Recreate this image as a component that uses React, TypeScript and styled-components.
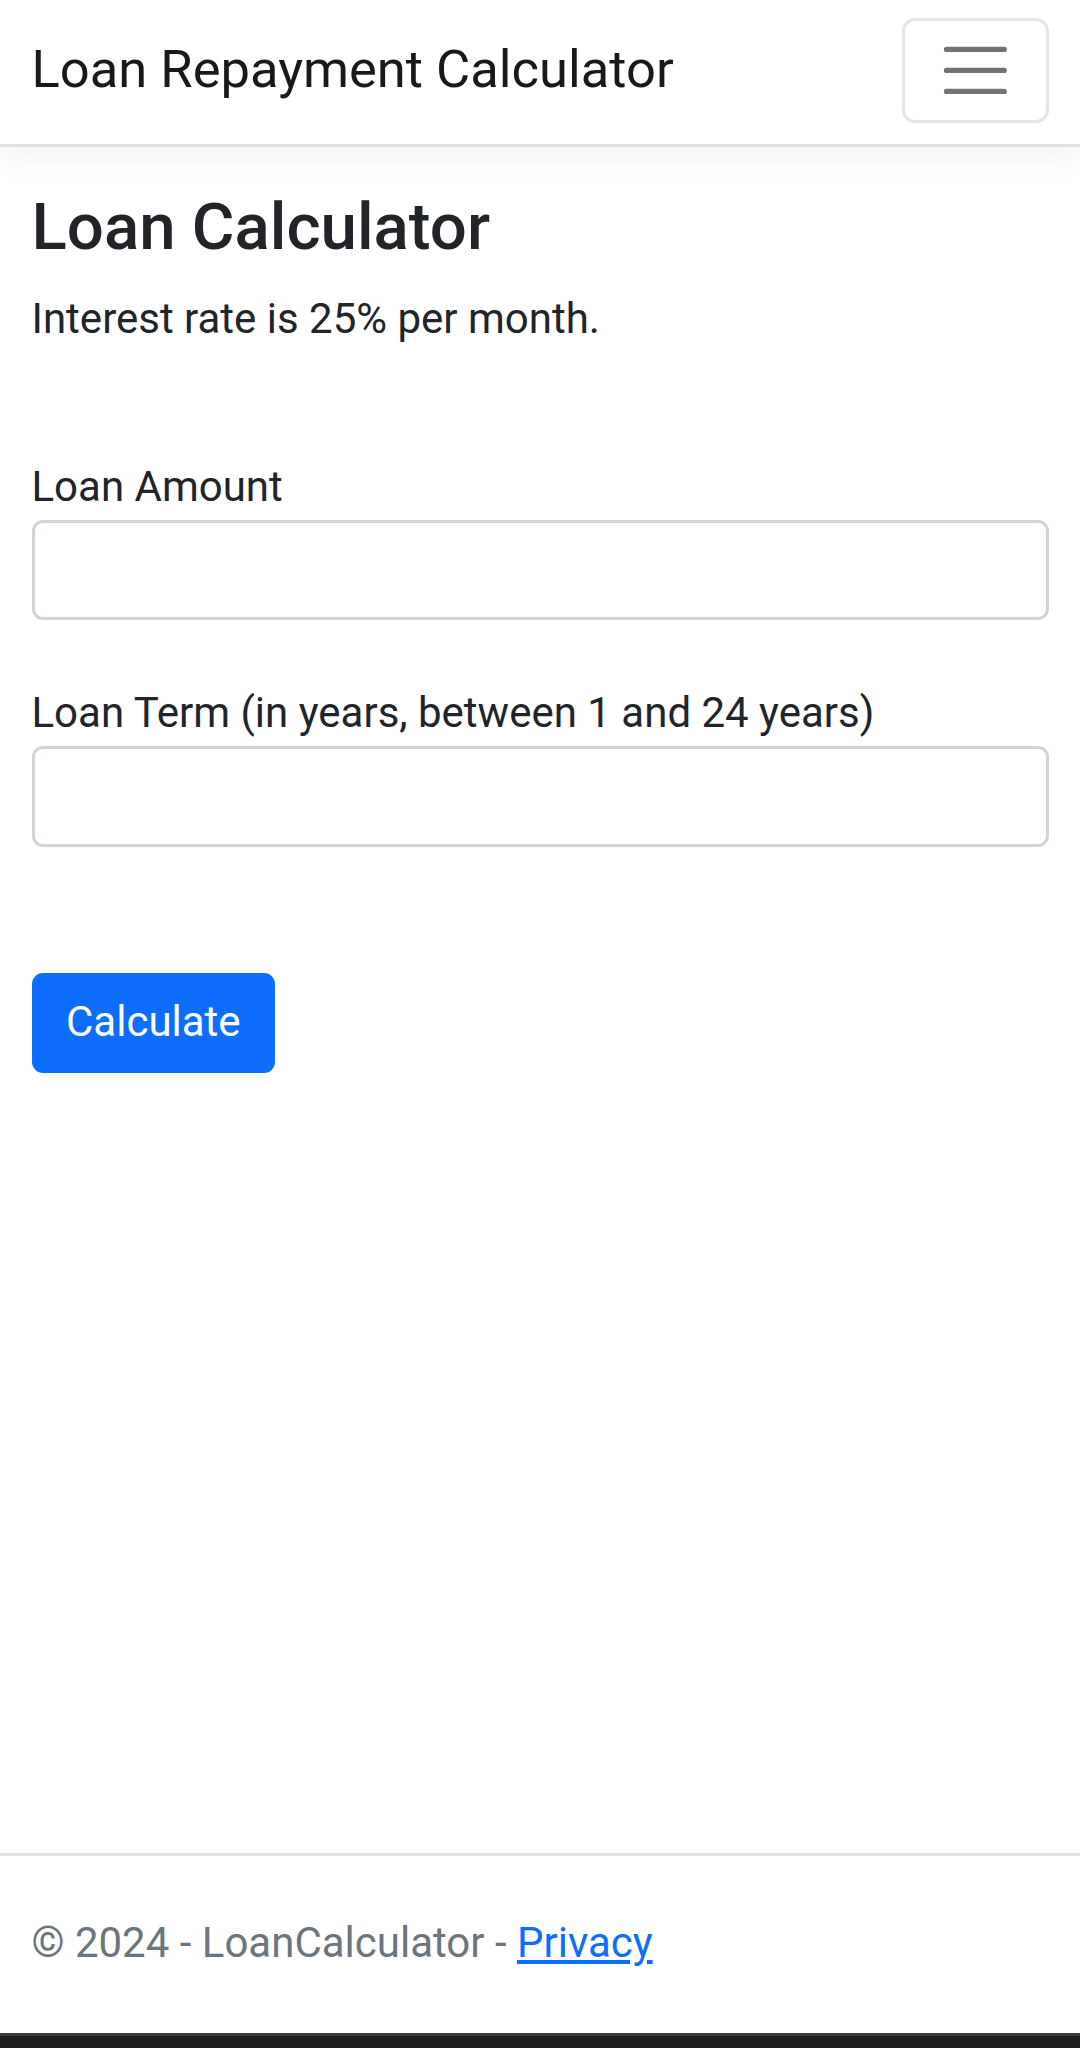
import React from "react";
import styled, { createGlobalStyle } from "styled-components";

const Global = createGlobalStyle`
  html, body { margin: 0; padding: 0; background: #fff; }
  body {
    font-family: Roboto, "Noto Sans", "Liberation Sans", sans-serif;
    font-size: 42px;
    line-height: 1.5;
    color: #212529;
  }
  *, *::before, *::after { box-sizing: border-box; }
`;

const Page = styled.div`
  min-height: 2048px;
  display: flex;
  flex-direction: column;
`;

const NavBar = styled.header`
  height: 147px;
  padding: 0 31.5px;
  display: flex;
  align-items: center;
  justify-content: space-between;
  background: #fff;
  border-bottom: 3px solid #dee2e6;
  box-shadow: 0 10.5px 31.5px rgba(0, 0, 0, 0.05);
  margin-bottom: 42px;
  position: relative;
  z-index: 1;
`;

const Brand = styled.a`
  font-size: 52.5px;
  line-height: 1.5;
  padding-bottom: 6px;
  color: rgba(0, 0, 0, 0.9);
  text-decoration: none;
  white-space: nowrap;
`;

const Toggler = styled.button`
  width: 147px;
  height: 105px;
  padding: 0;
  display: flex;
  align-items: center;
  justify-content: center;
  background: transparent;
  border: 3px solid rgba(0, 0, 0, 0.1);
  border-radius: 13px;
  margin-top: -4px;
`;

const Main = styled.main`
  flex: 1;
  padding: 0 31.5px 42px;
  display: flex;
  flex-direction: column;
  align-items: flex-start;
`;

const Title = styled.h2`
  margin: 0 0 21px;
  padding-bottom: 3px;
  font-size: 65.4px;
  font-weight: 500;
  line-height: 75.5px;
  color: #212529;
`;

const Lead = styled.p`
  margin: 0 0 42px;
  line-height: 60px;
  padding-bottom: 3px;
`;

const Spacer = styled.div<{ $h: number }>`
  height: ${(p) => p.$h}px;
  flex-shrink: 0;
`;

const Form = styled.form`
  display: flex;
  flex-direction: column;
  align-items: flex-start;
  align-self: stretch;
`;

const Label = styled.label`
  display: block;
  line-height: 60px;
  padding-bottom: 3px;
  color: #212529;
`;

const Input = styled.input`
  display: block;
  width: 100%;
  height: 100.5px;
  padding: 15.75px 31.5px;
  font-family: inherit;
  font-size: 42px;
  color: #212529;
  background: #fff;
  border: 3px solid #ced4da;
  border-radius: 11px;
  outline: none;
`;

const Button = styled.button`
  height: 100.5px;
  padding: 0 31.5px 2px;
  font-family: inherit;
  font-size: 42px;
  line-height: 1.5;
  color: #fff;
  background: #0d6efd;
  border: 3px solid #0d6efd;
  border-radius: 11px;
`;

const Footer = styled.footer`
  border-top: 3px solid #dee2e6;
  height: 180px;
  line-height: 174px;
  padding: 0 31.5px 3px;
  color: #6c757d;
  white-space: nowrap;
`;

const FooterLink = styled.a`
  color: #0d6efd;
  text-decoration: underline;
`;

const SystemBar = styled.div`
  height: 15px;
  background: #202020;
  border-top: 3px solid #3c3c3c;
`;

const HamburgerIcon = () => (
  <svg width="78.75" height="78.75" viewBox="0 0 30 30" aria-hidden="true">
    <path
      stroke="rgba(0,0,0,0.55)"
      strokeLinecap="round"
      strokeMiterlimit="10"
      strokeWidth="2"
      d="M4 7h22M4 15h22M4 23h22"
    />
  </svg>
);

export default function App() {
  return (
    <Page>
      <Global />
      <NavBar>
        <Brand href="#">Loan Repayment Calculator</Brand>
        <Toggler type="button" aria-label="Toggle navigation">
          <HamburgerIcon />
        </Toggler>
      </NavBar>
      <Main>
        <Title>Loan Calculator</Title>
        <Lead>Interest rate is 25% per month.</Lead>
        <Form onSubmit={(e) => e.preventDefault()}>
          <Spacer $h={63} />
          <Label htmlFor="amount">Loan Amount</Label>
          <Input id="amount" type="text" />
          <Spacer $h={63} />
          <Label htmlFor="term">Loan Term (in years, between 1 and 24 years)</Label>
          <Input id="term" type="text" />
          <Spacer $h={126} />
          <Button type="submit">Calculate</Button>
        </Form>
      </Main>
      <Footer>
        © 2024 - LoanCalculator - <FooterLink href="#">Privacy</FooterLink>
      </Footer>
      <SystemBar />
    </Page>
  );
}
